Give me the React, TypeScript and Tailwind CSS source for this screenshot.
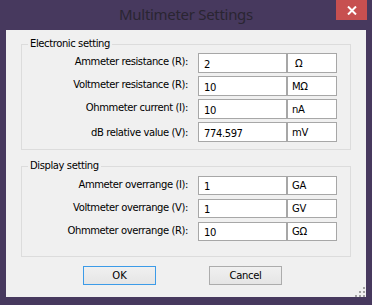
import React from "react";

const font = { fontFamily: '"DejaVu Sans", sans-serif' };

function Row({
  label,
  value,
  unit,
  h,
  lift = true,
}: {
  label: string;
  value: string;
  unit: string;
  h: string;
  lift?: boolean;
}) {
  return (
    <div className={`flex items-stretch ${h}`}>
      <div
        className={`w-[166px] flex items-center justify-end text-[10px] tracking-[-0.4px] text-black whitespace-nowrap ${
          lift ? "pb-[3px]" : ""
        }`}
      >
        {label}
      </div>
      <div className="ml-[10px] w-[89px] bg-white border border-[#a7a7a7] flex items-center pl-[5px] pt-[2px] text-[10px] tracking-[-0.4px] text-black">
        {value}
      </div>
      <div className="w-[50px] bg-white border border-[#a7a7a7] flex items-center pl-[4px] text-[10px] tracking-[-0.3px] text-black whitespace-pre">
        {unit}
      </div>
    </div>
  );
}

function Group({
  title,
  className,
  children,
}: {
  title: string;
  className: string;
  children: React.ReactNode;
}) {
  return (
    <div className={`relative w-[330px] border border-[#dcdcdc] ${className}`}>
      <span className="absolute -top-[8px] left-[6px] bg-[#f0f0f0] px-[2px] text-[10px] tracking-[-0.4px] leading-[14px] text-black">
        {title}
      </span>
      {children}
    </div>
  );
}

export default function App() {
  return (
    <div
      className="relative w-[372px] h-[305px] bg-[#47395e] flex flex-col"
      style={font}
    >
      <div className="h-[30px] flex items-center justify-center pb-[2px]">
        <span
          className="text-[15px] tracking-[-0.3px] text-[#2a2532]"
          style={{ fontFamily: '"Noto Sans", sans-serif' }}
        >
          Multimeter Settings
        </span>
      </div>
      <div className="absolute top-0 right-[5px] w-[31px] h-[20px] bg-[#c75050] flex items-center justify-center">
        <svg width="10" height="9" viewBox="0 0 10 9">
          <path d="M1 0.5 L9 8.5 M9 0.5 L1 8.5" stroke="white" strokeWidth="2" />
        </svg>
      </div>
      <div className="relative mx-[6px] mb-[8px] flex-1 bg-[#f0f0f0] pt-[14px] px-[15px] flex flex-col">
        <Group title="Electronic setting" className="h-[106px] pt-[8px]">
          <div className="flex flex-col gap-[3px]">
            <Row label="Ammeter resistance (R):" value="2" unit={"\u00a0Ω"} h="h-[20px]" />
            <Row label="Voltmeter resistance (R):" value="10" unit="MΩ" h="h-[20px]" />
            <Row label="Ohmmeter current (I):" value="10" unit="nA" h="h-[20px]" />
            <Row label="dB relative value (V):" value="774.597" unit="mV" h="h-[20px]" lift={false} />
          </div>
        </Group>
        <Group title="Display setting" className="mt-[16px] h-[91px] pt-[9px]">
          <div className="flex flex-col gap-[4px]">
            <Row label="Ammeter overrange (I):" value="1" unit="GA" h="h-[19px]" />
            <Row label="Voltmeter overrange (V):" value="1" unit="GV" h="h-[19px]" />
            <Row label="Ohmmeter overrange (R):" value="10" unit="GΩ" h="h-[19px]" />
          </div>
        </Group>
        <div className="mt-[9px] ml-[62px] flex gap-[53px]">
          <button className="w-[73px] h-[19px] border border-[#3c9be8] bg-gradient-to-b from-[#f0f0f0] to-[#e5e5e5] text-[10px] text-black flex items-center justify-center">
            OK
          </button>
          <button className="w-[73px] h-[19px] border border-[#acacac] bg-gradient-to-b from-[#f0f0f0] to-[#e5e5e5] text-[10px] tracking-[-0.3px] text-black flex items-center justify-center">
            Cancel
          </button>
        </div>
        <div className="absolute right-[1px] bottom-0 w-[10px] h-[10px]">
          <div className="absolute right-0 top-0 w-[2px] h-[2px] bg-[#a0a0a0]" />
          <div className="absolute right-0 top-[4px] w-[2px] h-[2px] bg-[#a0a0a0]" />
          <div className="absolute right-[4px] top-[4px] w-[2px] h-[2px] bg-[#a0a0a0]" />
          <div className="absolute right-0 top-[8px] w-[2px] h-[2px] bg-[#a0a0a0]" />
          <div className="absolute right-[4px] top-[8px] w-[2px] h-[2px] bg-[#a0a0a0]" />
          <div className="absolute right-[8px] top-[8px] w-[2px] h-[2px] bg-[#a0a0a0]" />
        </div>
      </div>
    </div>
  );
}
